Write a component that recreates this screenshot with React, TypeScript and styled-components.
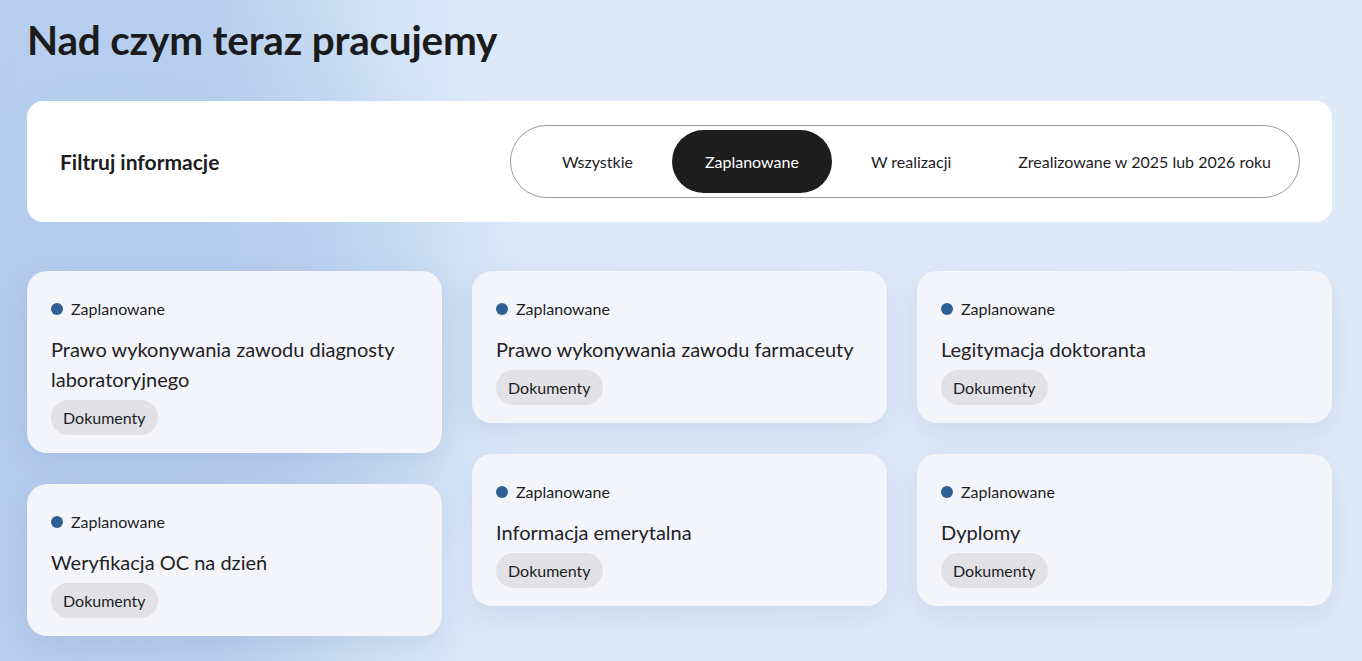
import React, { useState } from 'react';
import styled, { createGlobalStyle } from 'styled-components';

const GlobalStyle = createGlobalStyle`
  html, body {
    margin: 0;
    padding: 0;
  }
  body {
    font-family: Lato, "Open Sans", "Liberation Sans", sans-serif;
    color: #1d1d1f;
    background: #dde9f8;
  }
  * {
    box-sizing: border-box;
  }
`;

type Item = {
  title: string;
  tag: string;
};

const columns: Item[][] = [
  [
    { title: 'Prawo wykonywania zawodu diagnosty laboratoryjnego', tag: 'Dokumenty' },
    { title: 'Weryfikacja OC na dzień', tag: 'Dokumenty' },
  ],
  [
    { title: 'Prawo wykonywania zawodu farmaceuty', tag: 'Dokumenty' },
    { title: 'Informacja emerytalna', tag: 'Dokumenty' },
  ],
  [
    { title: 'Legitymacja doktoranta', tag: 'Dokumenty' },
    { title: 'Dyplomy', tag: 'Dokumenty' },
  ],
];

const filters = ['Wszystkie', 'Zaplanowane', 'W realizacji', 'Zrealizowane w 2025 lub 2026 roku'];

const App = () => {
  const [active, setActive] = useState('Zaplanowane');

  return (
    <Page>
      <GlobalStyle />
      <Title>Nad czym teraz pracujemy</Title>
      <FilterCard>
        <FilterLabel>Filtruj informacje</FilterLabel>
        <Segments>
          {filters.map((f) => (
            <Segment key={f} isActive={f === active} onClick={() => setActive(f)}>
              {f}
            </Segment>
          ))}
        </Segments>
      </FilterCard>
      <Grid>
        {columns.map((col, i) => (
          <Column key={i}>
            {col.map((item) => (
              <Card key={item.title}>
                <Status>
                  <Dot />
                  Zaplanowane
                </Status>
                <CardTitle>{item.title}</CardTitle>
                <Tag>{item.tag}</Tag>
              </Card>
            ))}
          </Column>
        ))}
      </Grid>
    </Page>
  );
};

export default App;

const Page = styled.div`
  min-height: 100vh;
  padding: 16px 30px 40px 27px;
  background:
    radial-gradient(ellipse 420px 380px at 120px 330px, rgba(178, 203, 238, 0.95) 0%, rgba(178, 203, 238, 0.6) 55%, rgba(178, 203, 238, 0) 100%),
    linear-gradient(90deg, #b8cfee 0px, #b9d0ee 210px, #d3e3f6 390px, #dde9f8 500px, #deeaf8 100%);
`;

const Title = styled.h1`
  margin: 0 0 37px;
  font-size: 40.5px;
  line-height: 48px;
  font-weight: 700;
  color: #1b1b1b;
  letter-spacing: -0.2px;
`;

const FilterCard = styled.div`
  height: 121px;
  background: #ffffff;
  border-radius: 16px;
  padding: 0 32px 0 33px;
  display: flex;
  align-items: center;
  justify-content: space-between;
`;

const FilterLabel = styled.div`
  font-size: 21px;
  font-weight: 700;
  color: #1d1d1f;
`;

const Segments = styled.div`
  display: flex;
  align-items: center;
  gap: 6px;
  padding: 4px 4px 4px 18px;
  border: 1px solid #9a9a9a;
  border-radius: 999px;
`;

const Segment = styled.button<{ isActive: boolean }>`
  height: 63px;
  padding: 0 33px;
  border: none;
  border-radius: 999px;
  font-family: inherit;
  font-size: 16px;
  cursor: pointer;
  background: ${(p) => (p.isActive ? '#1d1d1d' : 'transparent')};
  color: ${(p) => (p.isActive ? '#ffffff' : '#1d1d1f')};

  &:last-child {
    padding: 0 24px 0 28px;
  }
`;

const Grid = styled.div`
  margin-top: 49px;
  display: grid;
  grid-template-columns: repeat(3, 1fr);
  column-gap: 30px;
  align-items: start;
`;

const Column = styled.div`
  display: flex;
  flex-direction: column;
  gap: 31px;
`;

const Card = styled.div`
  background: #f4f5fa;
  border-radius: 20px;
  padding: 27px 24px 18px;
  box-shadow: 0 10px 28px rgba(70, 100, 150, 0.12);
  display: flex;
  flex-direction: column;
  align-items: flex-start;
`;

const Status = styled.div`
  display: flex;
  align-items: center;
  gap: 8px;
  font-size: 16px;
  line-height: 22px;
  color: #1d1d1f;
`;

const Dot = styled.span`
  width: 12px;
  height: 12px;
  border-radius: 50%;
  background: #2f5f93;
`;

const CardTitle = styled.div`
  margin-top: 14px;
  font-size: 20px;
  line-height: 30px;
  color: #222226;
`;

const Tag = styled.span`
  margin-top: 6px;
  height: 35px;
  line-height: 35px;
  padding: 0 12px;
  border-radius: 18px;
  background: #e2e2e6;
  font-size: 16px;
  color: #1d1d1f;
`;
